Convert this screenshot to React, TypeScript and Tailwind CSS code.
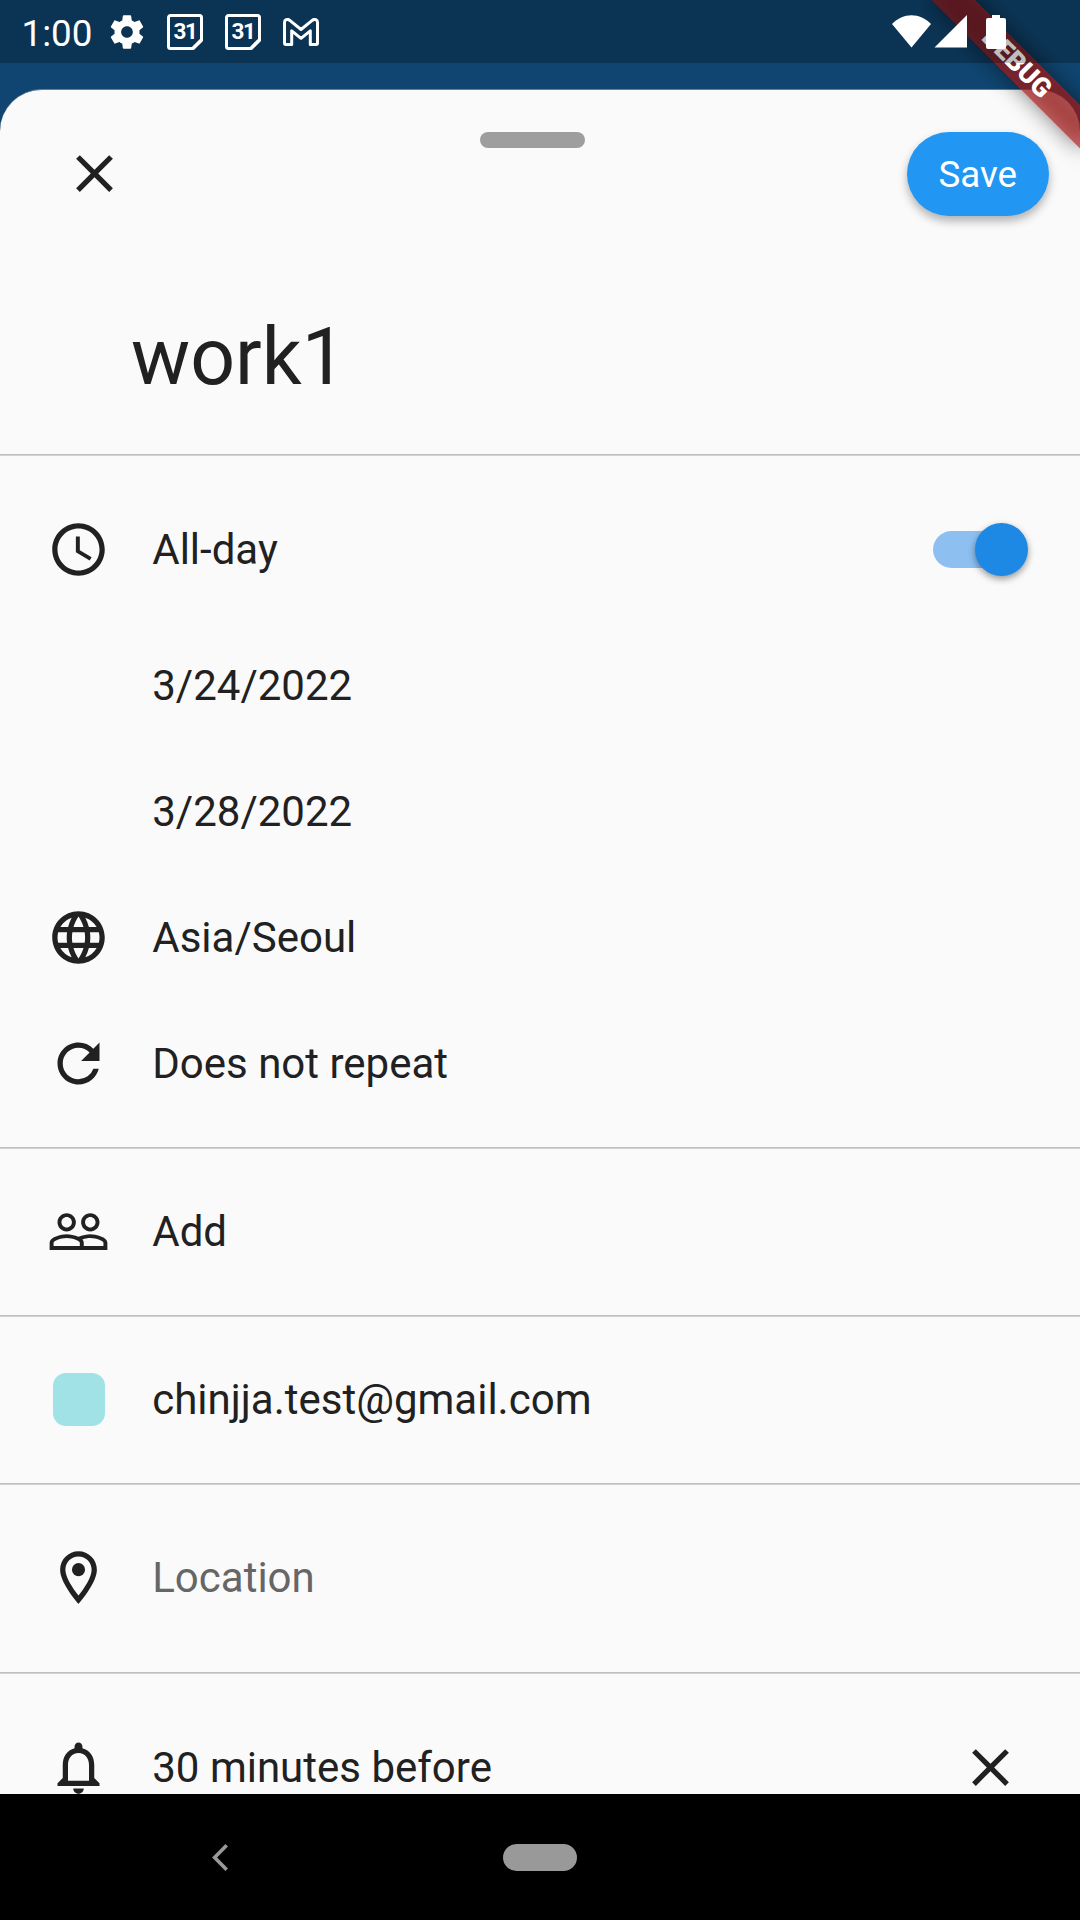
import type { ReactNode } from 'react';
import {
  MdAccessTime,
  MdClose,
  MdLanguage,
  MdNotificationsNone,
  MdOutlineLocationOn,
  MdPeopleOutline,
  MdRefresh,
} from 'react-icons/md';

function GearIcon() {
  return (
    <svg viewBox="0 0 24 24" className="ml-[16px] size-[40px] shrink-0" fill="currentColor">
      <path d="M19.43 12.98c.04-.32.07-.64.07-.98s-.03-.66-.07-.98l2.11-1.65c.19-.15.24-.42.12-.64l-2-3.46c-.12-.22-.39-.3-.61-.22l-2.49 1c-.52-.4-1.08-.73-1.69-.98l-.38-2.65C14.46 2.18 14.25 2 14 2h-4c-.25 0-.46.18-.49.42l-.38 2.65c-.61.25-1.17.59-1.69.98l-2.49-1c-.23-.09-.49 0-.61.22l-2 3.46c-.13.22-.07.49.12.64l2.11 1.65c-.04.32-.07.65-.07.98s.03.66.07.98l-2.11 1.65c-.19.15-.24.42-.12.64l2 3.46c.12.22.39.3.61.22l2.49-1c.52.4 1.08.73 1.69.98l.38 2.65c.03.24.24.42.49.42h4c.25 0 .46-.18.49-.42l.38-2.65c.61-.25 1.17-.59 1.69-.98l2.49 1c.23.09.49 0 .61-.22l2-3.46c.12-.22.07-.49-.12-.64l-2.11-1.65zM12 15.5c-1.93 0-3.5-1.57-3.5-3.5s1.57-3.5 3.5-3.5 3.5 1.57 3.5 3.5-1.57 3.5-3.5 3.5z" />
    </svg>
  );
}

function CalendarIcon() {
  return (
    <div className="relative mr-[22px] flex size-[36px] shrink-0">
      <svg viewBox="0 0 36 36" className="absolute inset-0 size-[36px]" fill="none" stroke="currentColor" strokeWidth="3" strokeLinejoin="round">
        <path d="M3.500 1.500H32.500a2 2 0 0 1 2 2V26.400L26.400 34.500H3.500a2 2 0 0 1-2-2V3.500a2 2 0 0 1 2-2Z" />
        <path d="M25 34.500L34.500 25" strokeWidth="2.400" />
      </svg>
      <span className="relative w-full pt-[5px] text-center text-[22.500px] leading-[24px] font-bold tracking-[-1.500px]">31</span>
    </div>
  );
}

function MailIcon() {
  return (
    <svg viewBox="0 0 36 28" className="h-[28px] w-[36px] shrink-0" fill="none" stroke="currentColor" strokeWidth="3" strokeLinejoin="round">
      <path d="M1.500 4.400C1.500 1.900 4.300.5 6.500 2.200L18 11.500L29.500 2.200C31.700 .5 34.500 1.900 34.500 4.400V25.100a1.400 1.400 0 0 1-1.400 1.400H27.300V12.800L18 20.300L8.700 12.800V26.500H2.900a1.400 1.400 0 0 1-1.400-1.400Z" />
    </svg>
  );
}

function DebugBanner() {
  return (
    <div className="absolute top-0 right-0 size-[240px] overflow-hidden">
      <div className="absolute top-0 left-[240px] h-0 w-0 rotate-45">
        <div className="absolute top-[73.5px] left-[-105px] h-[31.5px] w-[210px] bg-black/50 blur-[10.4px]" />
        <div className="absolute top-[73.5px] left-[-105px] flex h-[31.5px] w-[210px] items-center justify-center bg-[#b71c1c]/63 text-[26.8px] leading-[31.5px] font-black text-white">
          DEBUG
        </div>
      </div>
    </div>
  );
}

function StatusBar() {
  return (
    <div className="absolute inset-x-0 top-0 flex h-[63px] items-center justify-between bg-black/25 text-white">
      <div className="flex h-full items-center pl-[21.500px]">
        <span className="w-[69.500px] pt-[3px] text-[36.75px] leading-[43px] whitespace-nowrap">1:00</span>
        <GearIcon />
        <div className="ml-[20px] flex items-center">
          <CalendarIcon />
          <CalendarIcon />
          <MailIcon />
        </div>
      </div>
      <svg viewBox="0 0 116 36" className="mr-[73px] h-[36px] w-[116px]" fill="currentColor">
        <path d="M1 10C12 -1.600 29 -1.600 40 10L20.500 33.500Z" />
        <path d="M76 1V33.500H43.500Z" />
        <path d="M101 1h8v3h4a2 2 0 0 1 2 2V33a2 2 0 0 1-2 2H97a2 2 0 0 1-2-2V6a2 2 0 0 1 2-2h4Z" />
      </svg>
    </div>
  );
}

function Row({ icon, children, height, trailing }: { icon?: ReactNode; children: ReactNode; height: string; trailing?: ReactNode }) {
  return (
    <div className={`flex shrink-0 items-center pl-[47.250px] ${height}`}>
      <div className="flex w-[63px] shrink-0 items-center justify-center pb-[1px] text-[63px]">{icon}</div>
      <div className="ml-[42px] flex-1 text-[42px] leading-[50px]">{children}</div>
      {trailing}
    </div>
  );
}

function Divider() {
  return <div className="h-[2px] shrink-0 border-t border-[#bfbfbf] bg-[#d2d2d2]" />;
}

export default function App() {
  return (
    <div className="relative flex h-[1920px] w-[1080px] flex-col overflow-hidden bg-[#0f4570] font-['Roboto',sans-serif] text-[#212121]">
      <div className="mt-[89px] flex h-[1705px] shrink-0 flex-col overflow-hidden rounded-t-[42px] border-t border-[#627f9b] bg-[#fafafa]">
        <header className="relative flex h-[168px] shrink-0 items-center justify-between pr-[31.500px] pl-[62.500px]">
          <MdClose className="mb-[1px] size-[63px]" />
          <div className="absolute top-[41.500px] left-[479.500px] h-[16px] w-[105px] rounded-full bg-[#9e9e9e]" />
          <button className="h-[84px] w-[141.500px] rounded-full bg-[#2196f3] pt-[2px] text-[36.750px] text-white shadow-[0_5px_10px_rgba(0,0,0,0.3)]">Save</button>
        </header>
        <div className="flex h-[196px] shrink-0 items-center pt-[2px] pl-[131px] text-[78.750px] leading-[92px]">work1</div>
        <Divider />
        <div className="h-[30px] shrink-0" />
        <Row
          height="h-[127px]"
          icon={<MdAccessTime />}
          trailing={
            <div className="mr-[52.500px] flex h-[37px] w-[94.500px] items-center justify-end rounded-full bg-gradient-to-r from-[#8dc0f0] from-85% to-transparent to-85%">
              <div className="size-[52.500px] shrink-0 rounded-full bg-[#1e88e5] shadow-[0_3px_7px_rgba(0,0,0,0.4)]" />
            </div>
          }
        >
          All-day
        </Row>
        <div className="h-[10px] shrink-0" />
        <Row height="h-[126px]">3/24/2022</Row>
        <Row height="h-[126px]">3/28/2022</Row>
        <Row height="h-[126px]" icon={<MdLanguage />}>Asia/Seoul</Row>
        <Row height="h-[126px]" icon={<MdRefresh />}>Does not repeat</Row>
        <div className="h-[20px] shrink-0" />
        <Divider />
        <Row height="h-[166px]" icon={<MdPeopleOutline />}>Add</Row>
        <Divider />
        <Row height="h-[166px]" icon={<div className="size-[52.500px] rounded-[13px] bg-[#a0e2e6]" />}>
          chinjja.test@gmail.com
        </Row>
        <Divider />
        <Row height="h-[186px]" icon={<MdOutlineLocationOn />}>
          <span className="text-[#666666]">Location</span>
        </Row>
        <div className="h-[1px] shrink-0" />
        <Divider />
        <Row height="h-[188px]" icon={<MdNotificationsNone />} trailing={<MdClose className="mr-[58px] mb-[1px] size-[63px]" />}>
          30 minutes before
        </Row>
      </div>
      <nav className="grid h-[126px] shrink-0 grid-cols-[1fr_74px_1fr] items-center bg-black text-[#999999]">
        <svg viewBox="0 0 16 27" className="ml-[212px] h-[27px] w-[16px]" fill="none" stroke="currentColor" strokeWidth="3.6">
          <path d="M14.700 1.300L2.600 13.500L14.700 25.700" />
        </svg>
        <div className="h-[27px] rounded-full bg-[#999999]" />
      </nav>
      <DebugBanner />
      <StatusBar />
    </div>
  );
}
